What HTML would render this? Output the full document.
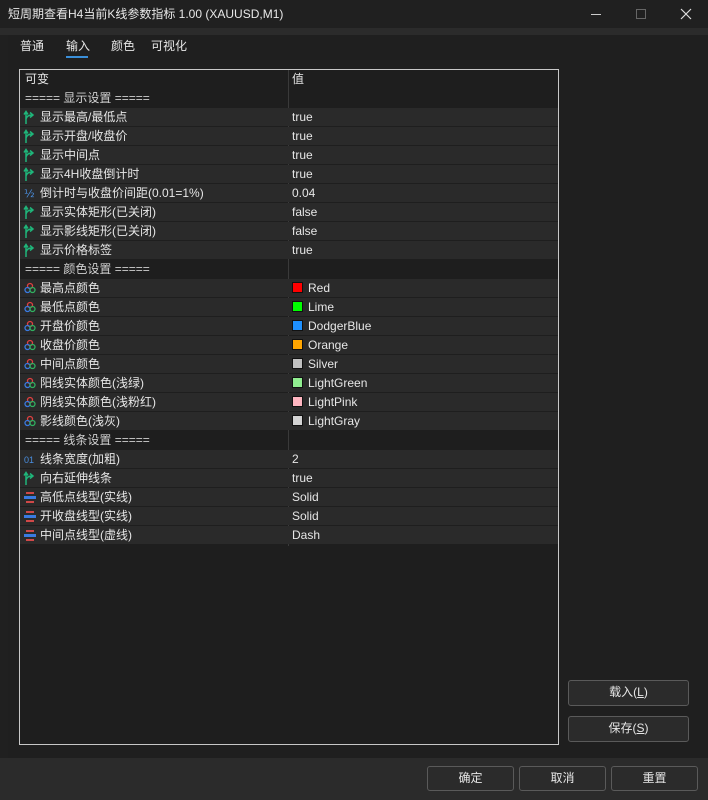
<!DOCTYPE html>
<html><head><meta charset="utf-8"><style>
*{margin:0;padding:0;box-sizing:border-box}
body{width:708px;height:800px;background:#202020;font-family:"Liberation Sans","Noto Sans CJK SC",sans-serif;font-size:12px;color:#e6e6e6;position:relative;overflow:hidden}
.title{position:absolute;left:0;top:0;width:708px;height:28px;background:#202020;}
.title span{position:absolute;left:8px;top:0;line-height:28px;font-size:12px;color:#e8e8e8}
.band{position:absolute;left:0;top:28px;width:708px;height:7px;background:#2b2b2b}
.panel{position:absolute;left:8px;top:35px;width:692px;height:723px;background:#1f1f1f}
.bottom{position:absolute;left:0;top:758px;width:708px;height:42px;background:#2b2b2b}
.tab{position:absolute;top:36px;line-height:20px;font-size:12px;color:#e6e6e6}
.ul{position:absolute;left:66px;top:56px;width:22px;height:2px;background:#3a8fd9}
.tbl{position:absolute;left:19px;top:69px;width:540px;height:676px;border:1px solid #c8c8c8;background:#1e1e1e}
.row{position:absolute;left:0;width:538px;height:18px;line-height:18px}
.row.d{background:#2a2a2a}
.c1{position:absolute;left:20px;top:0;white-space:nowrap}
.c2{position:absolute;left:272px;top:0;white-space:nowrap}
.sec .c1{left:5px;color:#d0d0d0}
.vl{position:absolute;left:268px;top:0;width:1px;height:476px;background:#3a3a3a}
.ic{position:absolute;left:4px;top:3px;width:12px;height:12px}
.sw{display:inline-block;width:11px;height:11px;vertical-align:-1px;margin-right:5px;border:1px solid #111}
.btn{position:absolute;border:1px solid #5a5a5a;border-radius:3px;background:#2b2b2b;text-align:center;line-height:23px;font-size:12px;color:#e6e6e6}
</style></head><body>
<div class="title"><span>短周期查看H4当前K线参数指标 1.00 (XAUUSD,M1)</span>
<div style="position:absolute;left:591px;top:14px;width:10px;height:1px;background:#ccc"></div>
<div style="position:absolute;left:636px;top:9px;width:10px;height:10px;border:1px solid #666"></div>
<svg style="position:absolute;left:680px;top:8px" width="12" height="12"><path d="M1 1L11 11M11 1L1 11" stroke="#ddd" stroke-width="1.2"/></svg>
</div>
<div class="band"></div>
<div class="panel"></div>
<div class="bottom"></div>
<div class="tab" style="left:20px">普通</div>
<div class="tab" style="left:66px">输入</div>
<div class="tab" style="left:111px">颜色</div>
<div class="tab" style="left:151px">可视化</div>
<div class="ul"></div>
<div class="tbl" id="t">
<div class="row" style="top:0"><span class="c1" style="left:5px">可变</span><span class="c2">值</span></div>
<div class="vl"></div>
</div>
<div class="btn" style="left:568px;top:680px;width:121px;height:26px">载入(<u>L</u>)</div>
<div class="btn" style="left:568px;top:716px;width:121px;height:26px">保存(<u>S</u>)</div>
<div class="btn" style="left:427px;top:766px;width:87px;height:25px">确定</div>
<div class="btn" style="left:519px;top:766px;width:87px;height:25px">取消</div>
<div class="btn" style="left:611px;top:766px;width:87px;height:25px">重置</div>
<script>
var B='<svg class="ic" style="left:3px;top:2px;width:14px;height:14px" viewBox="0 0 14 14"><path d="M3 14V2M1 4.5L3 1.5L5 4.5M3 9Q4 5 9 5M7 2.5L10 5L7 7.5" stroke="#1fb57a" stroke-width="1.5" fill="none"/></svg>';
var H='<svg class="ic" viewBox="0 0 12 12"><text x="0" y="10" font-size="11" fill="#4a8fe0" font-family="DejaVu Sans">½</text></svg>';
var C='<svg class="ic" viewBox="0 0 12 12"><circle cx="6" cy="4" r="2.5" fill="none" stroke="#e04040" stroke-width="1.3"/><circle cx="3.5" cy="8" r="2.5" fill="none" stroke="#3a7ae0" stroke-width="1.3"/><circle cx="8.5" cy="8" r="2.5" fill="none" stroke="#30b060" stroke-width="1.3"/></svg>';
var O='<svg class="ic" viewBox="0 0 12 12"><text x="0" y="10" font-size="9" fill="#4a8fe0" font-family="Liberation Sans">01</text></svg>';
var L='<svg class="ic" viewBox="0 0 12 12"><rect x="2" y="1" width="8" height="2" fill="#d04848"/><rect x="0" y="5" width="12" height="3" fill="#3a7ae0"/><rect x="2" y="10" width="8" height="2" fill="#d04848"/></svg>';
var rows=[['s','===== 显示设置 ====='],[B,'显示最高/最低点','true'],[B,'显示开盘/收盘价','true'],[B,'显示中间点','true'],[B,'显示4H收盘倒计时','true'],[H,'倒计时与收盘价间距(0.01=1%)','0.04'],[B,'显示实体矩形(已关闭)','false'],[B,'显示影线矩形(已关闭)','false'],[B,'显示价格标签','true'],['s','===== 颜色设置 ====='],[C,'最高点颜色','Red','#ff0000'],[C,'最低点颜色','Lime','#00ff00'],[C,'开盘价颜色','DodgerBlue','#1e90ff'],[C,'收盘价颜色','Orange','#ffa500'],[C,'中间点颜色','Silver','#c0c0c0'],[C,'阳线实体颜色(浅绿)','LightGreen','#90ee90'],[C,'阴线实体颜色(浅粉红)','LightPink','#ffb6c1'],[C,'影线颜色(浅灰)','LightGray','#d3d3d3'],['s','===== 线条设置 ====='],[O,'线条宽度(加粗)','2'],[B,'向右延伸线条','true'],[L,'高低点线型(实线)','Solid'],[L,'开收盘线型(实线)','Solid'],[L,'中间点线型(虚线)','Dash']];
var h='';rows.forEach(function(r,i){var top=19+i*19;
if(r[0]=='s')h+='<div class="row sec" style="top:'+top+'px"><span class="c1">'+r[1]+'</span></div>';
else h+='<div class="row d" style="top:'+top+'px">'+r[0]+'<span class="c1">'+r[1]+'</span><span class="c2">'+(r[3]?'<span class="sw" style="background:'+r[3]+'"></span>':'')+r[2]+'</span></div>';});
document.getElementById('t').insertAdjacentHTML('beforeend',h);
</script>
</body></html>
